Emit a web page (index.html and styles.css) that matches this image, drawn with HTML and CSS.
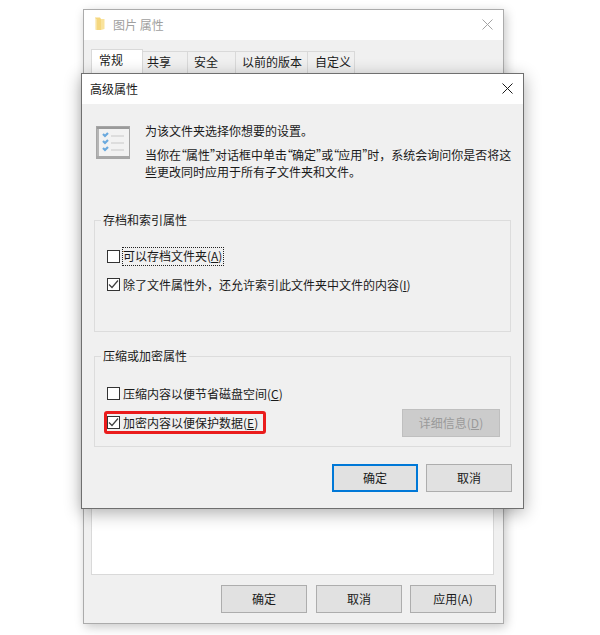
FILE: index.html
```html
<!DOCTYPE html>
<html lang="zh-CN">
<head>
<meta charset="utf-8">
<title>高级属性</title>
<link rel="stylesheet" href="styles.css">
</head>
<body>
<section class="window back">
  <header class="titlebar back-title">
    <svg class="folder" width="11" height="14" viewBox="0 0 11 14"><path d="M1 0.500h5l1 1.500V13H2.500L1 12z" fill="#f5d77e"/><path d="M7 2h3.500V12L7 13z" fill="#f9e39c"/><path d="M1 0.500V12l1.500 1V2.500z" fill="#fbeec4"/></svg>
    <span class="title-text">图片 属性</span>
    <svg class="close" width="11" height="11" viewBox="0 0 11 11"><path d="M0.500 0.500l10 10M10.500 0.500l-10 10" stroke="#a3a3a3" stroke-width="1" fill="none"/></svg>
  </header>
  <div class="back-body">
    <nav class="tabs">
      <span class="tab tab-active">常规</span>
      <span class="tab tab-w1">共享</span>
      <span class="tab tab-w2">安全</span>
      <span class="tab tab-w3">以前的版本</span>
      <span class="tab tab-w4">自定义</span>
    </nav>
    <div class="tab-panel"></div>
    <div class="back-actions">
      <button class="btn btn-wide-gap">确定</button>
      <button class="btn">取消</button>
      <button class="btn">应用(A)</button>
    </div>
  </div>
</section>

<section class="window front">
  <header class="titlebar front-title">
    <span class="title-text">高级属性</span>
    <svg class="close" width="11" height="11" viewBox="0 0 11 11"><path d="M0.500 0.500l10 10M10.500 0.500l-10 10" stroke="#1a1a1a" stroke-width="1" fill="none"/></svg>
  </header>
  <div class="front-body">
    <div class="intro">
      <svg class="intro-icon" width="34" height="33" viewBox="0 0 34 33">
        <rect x="0.500" y="0.500" width="33" height="32" fill="#f2f2f2" stroke="#a6a6a6"/>
        <rect x="1" y="1" width="32" height="2" fill="#9a9a9a"/>
        <rect x="1" y="30" width="32" height="2" fill="#a8a8a8"/>
        <rect x="1" y="3" width="2" height="27" fill="#b5b5b5"/>
        <path d="M7 8l2 2 3-3M7 15l2 2 3-3M7 22l2 2 3-3" stroke="#6aa9de" stroke-width="2.200" fill="none"/>
        <path d="M15 10h13M15 17h13M15 24h13" stroke="#d6d6d6" stroke-width="1.500"/>
      </svg>
      <div class="intro-text">
        <p class="intro-lead">为该文件夹选择你想要的设置。</p>
        <p class="intro-note">当你在<span class="q">“</span>属性<span class="q">”</span>对话框中单击<span class="q">“</span>确定<span class="q">”</span>或<span class="q">“</span>应用<span class="q">”</span>时，系统会询问你是否将这些更改同时应用于所有子文件夹和文件。</p>
      </div>
    </div>

    <fieldset class="group group-archive">
      <legend>存档和索引属性</legend>
      <label class="check check-first">
        <span class="box"></span>
        <span class="focus">可以存档文件夹(<u>A</u>)</span>
      </label>
      <label class="check check-second">
        <span class="box"><svg width="11" height="11" viewBox="0 0 11 11"><path d="M1 5.500l3 3 6-7" stroke="#404040" stroke-width="1.200" fill="none"/></svg></span>
        <span>除了文件属性外，还允许索引此文件夹中文件的内容(<u>I</u>)</span>
      </label>
    </fieldset>

    <fieldset class="group group-compress">
      <legend>压缩或加密属性</legend>
      <label class="check check-third">
        <span class="box"></span>
        <span>压缩内容以便节省磁盘空间(<u>C</u>)</span>
      </label>
      <div class="encrypt-row">
        <label class="check check-encrypt">
          <span class="box"><svg width="11" height="11" viewBox="0 0 11 11"><path d="M1 5.500l3 3 6-7" stroke="#404040" stroke-width="1.200" fill="none"/></svg></span>
          <span>加密内容以便保护数据(<u>E</u>)</span>
        </label>
        <button class="btn btn-disabled" disabled>详细信息(<u>D</u>)</button>
      </div>
    </fieldset>

    <div class="front-actions">
      <button class="btn btn-primary">确定</button>
      <button class="btn">取消</button>
    </div>
  </div>
</section>
</body>
</html>
```

FILE: styles.css
```css
* { box-sizing: border-box; }
html, body { margin: 0; height: 635px; overflow: hidden; background: #fff; }
body {
  position: relative;
  width: 600px;
  font: 12px/17px "Noto Sans CJK SC", "Noto Sans", sans-serif;
  color: #1a1a1a;
}
p { margin: 0; }
u { text-underline-offset: 1px; }

.window {
  position: absolute;
  display: flex;
  flex-direction: column;
  background: #f0f0f0;
}
.back {
  left: 83px;
  top: 9px;
  width: 421px;
  height: 615px;
  border: 1px solid #ababab;
  box-shadow: 2px 3px 10px rgba(0, 0, 0, .22);
}
.front {
  left: 81px;
  top: 73px;
  width: 443px;
  height: 436px;
  border: 1px solid #6f6f6f;
  box-shadow: 0 4px 16px rgba(0, 0, 0, .32);
}

.titlebar {
  display: flex;
  align-items: center;
  background: #fff;
  flex: none;
  height: 30px;
  padding-bottom: 2px;
}
.back-title { padding-left: 10px; padding-right: 10px; color: #9f9f9f; }
.front-title { padding-left: 8px; padding-right: 10px; }
.folder { margin-right: 8px; }
.title-text { flex: 1; }
.close { flex: none; }

.back-body {
  flex: 1;
  display: flex;
  flex-direction: column;
  padding: 9px 10px 10px 7px;
  min-height: 0;
}
.tabs { display: flex; align-items: flex-end; height: 24px; flex: none; }
.tab {
  height: 22px;
  padding-left: 7px;
  background: #f0f0f0;
  border: 1px solid #d9d9d9;
  border-bottom: 0;
  border-left: 0;
  line-height: 20px;
}
.tab-active {
  width: 52px;
  height: 24px;
  padding-left: 7px;
  background: #fff;
  border-left: 1px solid #d9d9d9;
}
.tab-w1 { width: 45px; padding-left: 4px; }
.tab-w2 { width: 48px; padding-left: 6px; }
.tab-w3 { width: 72px; padding-left: 6px; }
.tab-w4 { width: 47px; }
.tab-panel {
  flex: 1;
  background: #fff;
  border: 1px solid #d9d9d9;
  margin-right: -1px;
}
.back-actions {
  flex: none;
  display: flex;
  justify-content: flex-end;
  gap: 8px;
  margin-top: 10px;
  margin-right: -3px;
}
.btn-wide-gap { margin-right: 1px; }

.btn {
  width: 86px;
  height: 28px;
  padding: 0 0 2px;
  background: #e1e1e1;
  border: 1px solid #adadad;
  font: inherit;
  color: #1a1a1a;
}
.btn-primary { border: 2px solid #0078d7; }
.btn-disabled {
  width: 98px;
  background: #cccccc;
  border-color: #bfbfbf;
  color: #9a9a9a;
  margin-right: 10px;
}

.front-body {
  flex: 1;
  padding: 18px 11px 0 12px;
  display: flex;
  flex-direction: column;
}
.intro { display: flex; height: 89px; flex: none; }
.intro-icon { margin: 4px 15px 0 2px; flex: none; }
.intro-text { width: 372px; }
.intro-lead { margin-bottom: 7px; }
.q { font-feature-settings: "halt"; letter-spacing: -1px; }

.group {
  margin: 0;
  padding: 0;
  min-inline-size: 0;
  border: 1px solid #dcdcdc;
  flex: none;
}
.group legend {
  margin-left: 6px;
  padding: 0 2px 2px;
  line-height: 17px;
}
.group-archive { height: 121px; margin-right: 1px; }
.group-compress { height: 100px; margin-top: 15px; margin-right: 1px; }

.check { display: flex; align-items: center; gap: 3px; }
.box {
  width: 13px;
  height: 13px;
  flex: none;
  border: 1px solid #333;
  background: #fff;
  display: flex;
  align-items: center;
  justify-content: center;
}
.check-first, .check-second, .check-third { margin-left: 12px; }
.check-first { margin-top: 17px; height: 19px; }
.focus {
  outline: 1px dotted #222;
  outline-offset: -1px;
  padding: 0 2px 0 1px;
  margin-left: -1px;
  height: 19px;
  line-height: 18px;
  white-space: nowrap;
}
.check-second { margin-top: 10px; }
.check-third { margin-top: 19px; }

.encrypt-row { display: flex; justify-content: space-between; align-items: center; margin-top: 7px; }
.check-encrypt {
  margin-left: 9px;
  margin-bottom: 2px;
  height: 23px;
  width: 162px;
  padding-left: 3px;
  border-radius: 3px;
  outline: 3px solid #ea1c1c;
  outline-offset: -3px;
}

.front-actions {
  display: flex;
  justify-content: flex-end;
  gap: 8px;
  margin-top: 17px;
}
```
